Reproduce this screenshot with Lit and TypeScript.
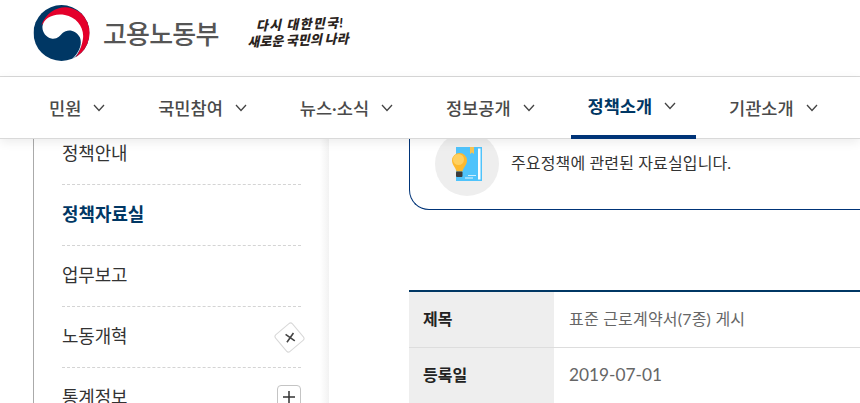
import { LitElement, html, css, svg } from "lit";
import { customElement } from "lit/decorators.js";

const caret = html`<svg class="caret" viewBox="0 0 12 8" width="12" height="8"><path d="M1 1l5 5.5L11 1" fill="none" stroke="#444" stroke-width="1.3"/></svg>`;

const emblem = svg`<svg class="emblem" viewBox="0 0 100 100" width="57" height="56">
  <defs><clipPath id="c"><circle cx="50" cy="50" r="50"/></clipPath></defs>
  <g clip-path="url(#c)">
    <rect width="100" height="100" fill="#003764"/>
    <path d="M14 36C22 14 42 3 58 4C72 5 84 12 104 30V100H68C78 92 87 78 86 62C85 46 70 28 50 26C35 25 22 28 14 36Z" fill="#e4002b"/>
    <path d="M16 38C18 24 36 14 56 18C78 22 92 42 88 62C86 78 76 92 70 98L64 101C80 88 88 72 83 58C76 44 60 42 52 50C48 54 42 62 32 60C22 58 15 48 16 38Z" fill="#fff"/>
  </g>
</svg>`;

const book = svg`<svg viewBox="0 0 64 64" width="64" height="64" class="book">
  <path d="M21 15h26v34H21z" fill="#4fc3fb"/>
  <rect x="43" y="16.5" width="2.5" height="31" fill="#fff"/>
  <path d="M35 15h4v7l-2-1.6-2 1.6z" fill="#f6c453"/>
  <rect x="33" y="43" width="8" height="1" fill="#cdeeff"/>
  <rect x="30" y="45.5" width="8" height="1" fill="#e8f8ff"/>
  <path d="M17 28.5a7.5 7.5 0 0 1 15 0c0 4.500-3.500 6.500-4.500 11h-6c-1-4.500-4.500-6.500-4.500-11z" fill="#fdb92e"/>
  <circle cx="23.500" cy="27.500" r="5.500" fill="#ffd060"/>
  <rect x="21" y="39.500" width="6.500" height="5.500" rx="1" fill="#3c3c3c"/>
</svg>`;

@customElement("app-root")
export class AppRoot extends LitElement {
  static styles = css`
    :host {
      display: block;
      width: 860px;
      height: 403px;
      overflow: hidden;
      background: #fff;
      font-family: Lato, "Noto Sans CJK KR", "Noto Sans", sans-serif;
      color: #333;
    }
    .top {
      box-sizing: border-box;
      padding: 5px 0 0 33px;
      display: flex;
      align-items: flex-start;
      border-bottom: 1px solid #d9d9d9;
      height: 77px;
    }
    .org {
      font-size: 26px;
      line-height: 58px;
      font-weight: 500;
      color: #555;
      margin-left: 13px;
      letter-spacing: -0.8px;
    }
    .slogan {
      margin: 11px 0 0 28px;
      font-size: 13px;
      line-height: 16px;
      font-weight: 900;
      color: #2a2320;
      font-style: italic;
      transform: rotate(-2deg);
      white-space: nowrap;
    }
    .slogan div:first-child { padding-left: 9px; letter-spacing: 1.3px; }
    .nav {
      position: relative;
      z-index: 2;
      height: 62px;
      box-sizing: border-box;
      display: flex;
      gap: 16.8px;
      padding-left: 33px;
      background: #fff;
      border-bottom: 1px solid #d9d9d9;
      box-shadow: 0 3px 10px rgba(0, 0, 0, 0.08);
    }
    .item {
      display: flex;
      align-items: center;
      gap: 12px;
      padding: 0 20px 2px 16px;
      height: 62px;
      box-sizing: border-box;
      font-size: 17.6px;
      font-weight: 500;
      color: #4a4a4a;
      white-space: nowrap;
    }
    .item .caret { margin-top: 2px; }
    .item.on {
      color: #003764;
      font-weight: 700;
      border-bottom: 4px solid #003478;
      padding-bottom: 2px;
    }
    .main {
      height: 264px;
      overflow: hidden;
      display: grid;
      grid-template-columns: 33px 296px 80px 600px;
    }
    .side {
      margin-top: -15px;
      border-left: 1px solid #aaa;
      box-sizing: border-box;
      padding-right: 28px;
      padding-left: 28px;
      background: linear-gradient(to right, #fff 0, #fff 286px, #f2f2f2 295px);
    }
    .side a {
      display: flex;
      align-items: center;
      justify-content: space-between;
      height: 61px;
      padding-bottom: 4px;
      font-size: 17.9px;
      letter-spacing: -0.1px;
      color: #333;
      border-bottom: 1px dashed #d4d4d4;
      box-sizing: border-box;
    }
    .side a.on { color: #003764; font-weight: 700; letter-spacing: 0; }
    .x {
      width: 23px;
      height: 23px;
      box-sizing: border-box;
      border: 1px solid #d8d8d8;
      border-radius: 3px;
      transform: rotate(-40deg);
      display: flex;
      align-items: center;
      justify-content: center;
      background: #fff;
      margin-top: 4px;
    }
    .x svg { transform: rotate(30deg); }
    .plus {
      width: 24px;
      height: 24px;
      box-sizing: border-box;
      border: 1px solid #c4c4c4;
      border-radius: 4px;
      display: flex;
      align-items: center;
      justify-content: center;
      margin-top: 2px;
    }
    .card {
      margin-top: -29px;
      height: 100px;
      box-sizing: border-box;
      border-left: 1px solid #003478;
      border-bottom: 1px solid #003478;
      border-bottom-left-radius: 20px;
      padding: 22px 0 0 25px;
      display: flex;
      align-items: flex-start;
      gap: 12px;
      font-size: 16px;
      letter-spacing: 0.13px;
      color: #333;
    }
    .circle {
      width: 64px;
      height: 64px;
      border-radius: 50%;
      background: #eee;
      flex: none;
    }
    .card span { line-height: 64px; margin-top: -1px; }
    .table {
      margin-top: 80px;
      border-top: 2px solid #003764;
      font-size: 16px;
    }
    .row {
      display: flex;
      height: 56px;
      box-sizing: border-box;
      border-bottom: 1px solid #ddd;
    }
    .row b {
      width: 145px;
      box-sizing: border-box;
      padding-left: 14px;
      background: #eee;
      color: #222;
      font-weight: 700;
      line-height: 54px;
    }
    .row span {
      padding-left: 15px;
      color: #666;
      line-height: 54px;
      letter-spacing: 0.2px;
    }
    .row span.date {
      font-size: 17.3px;
      letter-spacing: 0;
    }
  `;

  render() {
    return html`
      <div class="top">
        ${emblem}
        <div class="org">고용노동부</div>
        <div class="slogan"><div>다시 대한민국!</div><div>새로운 국민의 나라</div></div>
      </div>
      <nav class="nav">
        <div class="item">민원 ${caret}</div>
        <div class="item">국민참여 ${caret}</div>
        <div class="item">뉴스·소식 ${caret}</div>
        <div class="item">정보공개 ${caret}</div>
        <div class="item on">정책소개 ${caret}</div>
        <div class="item">기관소개 ${caret}</div>
      </nav>
      <div class="main">
        <div></div>
        <div class="side">
          <a>정책안내</a>
          <a class="on">정책자료실</a>
          <a>업무보고</a>
          <a>노동개혁<i class="x"><svg width="10" height="10" viewBox="0 0 10 10"><path d="M1 1l8 8M9 1L1 9" stroke="#444" stroke-width="1.600" fill="none"/></svg></i></a>
          <a>통계정보<i class="plus"><svg width="12" height="12" viewBox="0 0 12 12"><path d="M6 0v12M0 6h12" stroke="#333" stroke-width="1.500"/></svg></i></a>
        </div>
        <div></div>
        <div>
          <div class="card">
            <div class="circle">${book}</div>
            <span>주요정책에 관련된 자료실입니다.</span>
          </div>
          <div class="table">
            <div class="row"><b>제목</b><span>표준 근로계약서(7종) 게시</span></div>
            <div class="row"><b>등록일</b><span class="date">2019-07-01</span></div>
          </div>
        </div>
      </div>
    `;
  }
}
